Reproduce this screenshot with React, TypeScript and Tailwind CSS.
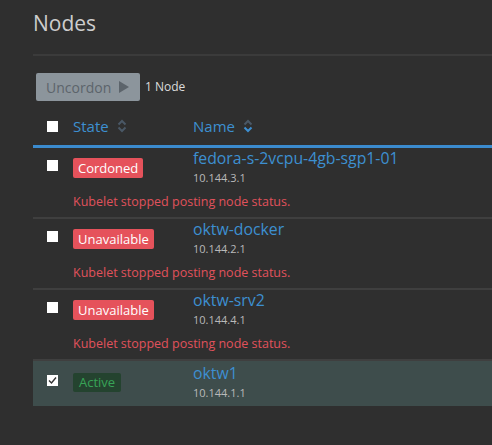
import React from "react";

type Node = {
  name: string;
  ip: string;
  state: "Cordoned" | "Unavailable" | "Active";
  error?: string;
  selected?: boolean;
};

const nodes: Node[] = [
  { name: "fedora-s-2vcpu-4gb-sgp1-01", ip: "10.144.3.1", state: "Cordoned", error: "Kubelet stopped posting node status." },
  { name: "oktw-docker", ip: "10.144.2.1", state: "Unavailable", error: "Kubelet stopped posting node status." },
  { name: "oktw-srv2", ip: "10.144.4.1", state: "Unavailable", error: "Kubelet stopped posting node status." },
  { name: "oktw1", ip: "10.144.1.1", state: "Active", selected: true },
];

function SortIcon({ active }: { active?: boolean }) {
  return (
    <svg width="10" height="14" viewBox="0 0 10 14" className="ml-[8px]">
      <path d="M1.5 5.5 L5 2 L8.5 5.5" fill="none" stroke="#4a5866" strokeWidth="2" />
      <path d="M1.5 8.5 L5 12 L8.5 8.5" fill="none" stroke={active ? "#3d8fd1" : "#4a5866"} strokeWidth="2" />
    </svg>
  );
}

function Checkbox({ checked }: { checked?: boolean }) {
  return (
    <div className="w-[11px] h-[11px] bg-white flex items-center justify-center">
      {checked && (
        <svg width="9" height="9" viewBox="0 0 9 9">
          <path d="M1 4.5 L3.5 7 L8 1.5" fill="none" stroke="#333" strokeWidth="1.4" />
        </svg>
      )}
    </div>
  );
}

function Badge({ state }: { state: Node["state"] }) {
  if (state === "Active") {
    return (
      <span className="block px-[6px] h-[19px] leading-[19px] rounded-[2px] bg-[#24432f] text-[#38a357] text-[13px]">
        {state}
      </span>
    );
  }
  return (
    <span className="block px-[5px] h-[20px] leading-[20px] rounded-[2px] bg-[#e5525b] text-white text-[13px]">
      {state}
    </span>
  );
}

export default function App() {
  return (
    <div className="w-[492px] h-[445px] bg-[#2f2f2f] overflow-hidden pl-[33px] font-['Open_Sans',sans-serif]">
      <h1 className="text-[21px] leading-[30px] pt-[8px] text-[#cdcdcd] font-normal">Nodes</h1>
      <div className="mt-[16px] h-[2px] bg-[#3b3b3b]" />

      <div className="flex items-center mt-[17px] pl-[3px]">
        <button className="flex items-center h-[28px] w-[104px] pl-[10px] rounded-[2px] bg-[#8c959c] text-[#5c646b] text-[14px]">
          Uncordon
          <svg width="10" height="12" viewBox="0 0 10 12" className="ml-[8px]">
            <path d="M0 0 L10 6 L0 12 Z" fill="#5c646b" />
          </svg>
        </button>
        <span className="ml-[5px] text-[12px] text-[#dcdcdc]">1 Node</span>
      </div>

      <div className="flex items-center h-[38px] mt-[6px] text-[#3d8fd1] text-[15px]">
        <div className="w-[40px] pl-[14px]"><Checkbox /></div>
        <div className="w-[120px] flex items-center">State<SortIcon /></div>
        <div className="flex items-center">Name<SortIcon active /></div>
      </div>
      <div className="h-[3px] bg-[#3b8bce]" />

      {nodes.map((n) => (
        <div
          key={n.name}
          className={
            n.selected
              ? "bg-[#3e4d4c] pt-[2px] pb-[5px]"
              : "pb-[6px] border-b-2 border-[#3f3f3f]"
          }
        >
          <div className="flex">
            <div className="w-[40px] pl-[14px] pt-[12px]"><Checkbox checked={n.selected} /></div>
            <div className="w-[120px] pt-[10px] flex items-start"><Badge state={n.state} /></div>
            <div className="flex flex-col">
              <span className="text-[15.8px] leading-[20px] text-[#3d8fd1]">{n.name}</span>
              <span className="mt-[2px] text-[11px] leading-[16px] text-[#b9b9b9]">{n.ip}</span>
            </div>
          </div>
          {n.error && (
            <div className="pl-[40px] mt-[7px] text-[12.5px] leading-[18px] text-[#e0525c]">{n.error}</div>
          )}
        </div>
      ))}
    </div>
  );
}
